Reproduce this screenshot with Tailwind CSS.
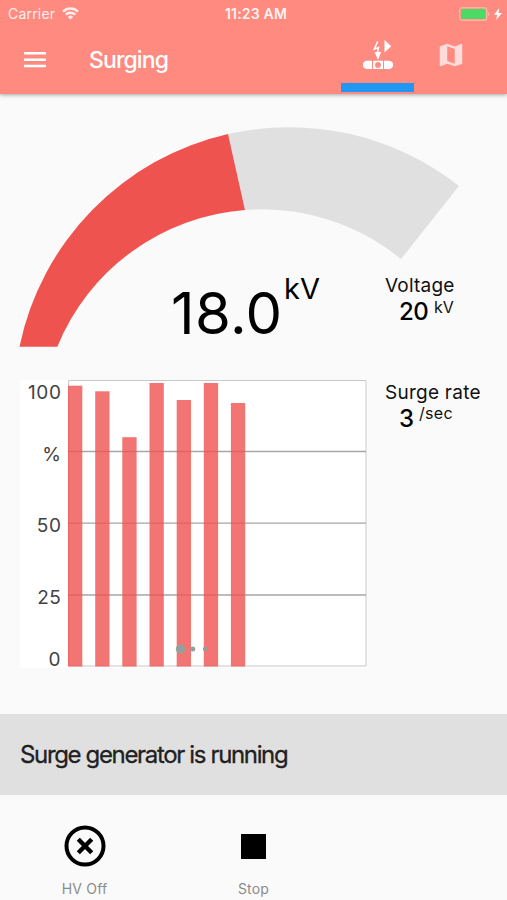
<!DOCTYPE html>
<html lang="en">
<head>
    <meta charset="UTF-8">
    <meta name="viewport" content="width=device-width, initial-scale=1.0">
    <title>Surging</title>
    <script src="https://cdn.jsdelivr.net/npm/@tailwindcss/browser@4"></script>
</head>
<body class="flex flex-col h-[900px] w-[507px] overflow-hidden bg-[#fafafa] font-['Inter',sans-serif] text-black">

    <!-- App bar -->
    <header class="h-[94px] shrink-0 bg-[#ff8a80] text-white shadow-[0_1px_4px_rgba(0,0,0,0.35)]">
        <!-- Status bar -->
        <div class="grid grid-cols-3 items-center h-[27px] pl-[8px] pr-[5px] text-[14px] leading-none">
            <div class="flex items-center gap-[7px] opacity-85">
                <span class="tracking-[0.2px]">Carrier</span>
                <svg class="w-[17px] h-[13px]" viewBox="0 0 17 13" fill="none" stroke="currentColor" stroke-width="2.4">
                    <path d="M1 4.6a10.6 10.6 0 0 1 15 0M3.8 7.7a6.6 6.6 0 0 1 9.4 0" />
                    <path d="M8.5 12.6L5.9 9.9a3.7 3.7 0 0 1 5.2 0z" fill="currentColor" stroke="none" />
                </svg>
            </div>
            <span class="pt-px pl-[2px] text-center font-semibold tracking-[0.2px] text-[14px] opacity-90">11:23 AM</span>
            <div class="flex items-center justify-end gap-[3px]">
                <svg class="w-[32px] h-[14px]" viewBox="0 0 32 14">
                    <rect x="0.7" y="0.7" width="27" height="12.6" rx="2.5" fill="none" stroke="#ffb5a3" stroke-width="1.4" />
                    <rect x="2" y="2" width="24.5" height="10" rx="1" fill="#4cd964" />
                    <path d="M29.3 5v4.2c1.6-.6 1.6-3.6 0-4.2z" fill="#ffc0b8" />
                </svg>
                <svg class="w-[8px] h-[12px]" viewBox="0 0 8 12" fill="currentColor"><path d="M5.2 0L0 6.8h3.2L2.2 12 8 4.9H4.6z" /></svg>
            </div>
        </div>
        <!-- Toolbar -->
        <div class="flex h-[65px]">
            <svg class="mt-[25px] ml-[24px] w-[22px] h-[16px]" viewBox="0 0 22 16" fill="currentColor">
                <path d="M0 0h22v2.5H0zM0 6.4h22v2.5H0zM0 12.8h22v2.5H0z" />
            </svg>
            <h1 class="ml-[43px] mt-[18px] w-[252px] text-[23px] leading-[30px] font-medium tracking-[-0.9px]">Surging</h1>
            <!-- Tabs -->
            <div class="flex w-[73px] flex-col items-center border-b-[9px] border-[#2196f3]">
                <svg class="mt-[13px] w-[30px] h-[30px]" viewBox="0 0 30 30" fill="currentColor">
                    <path d="M14.6 1.5L11.3 9.2l4.200-1.700-1 5" fill="none" stroke="currentColor" stroke-width="1.5" />
                    <path d="M11.6 12h6.6l-3.2 8z" />
                    <path d="M21.5 0v12.5L28.3 6.3z" />
                    <path d="M4 20.7H9v8.3H4a4.150 4.150 0 0 1 0-8.300zM26 20.7H21v8.3h5a4.150 4.150 0 0 0 0-8.300z" />
                    <path fill-rule="evenodd" d="M10 20.7h10v8.3H10zM15 22a2.9 2.9 0 1 0 0 5.8 2.9 2.9 0 0 0 0-5.8z" />
                </svg>
            </div>
            <div class="flex w-[73px] justify-center">
                <svg class="mt-[13px] w-[30px] h-[30px] opacity-70" viewBox="0 0 24 24" fill="currentColor">
                    <path d="M20.5 3l-.16.03L15 5.1 9 3 3.36 4.9c-.21.07-.36.25-.36.48V20.5c0 .28.22.5.5.5l.16-.03L9 18.9l6 2.1 5.64-1.9c.21-.07.36-.25.36-.48V3.5c0-.28-.22-.5-.5-.5zM15 19l-6-2.11V5l6 2.11V19z" />
                </svg>
            </div>
        </div>
    </header>

    <!-- Voltage gauge -->
    <section class="relative h-[286px] shrink-0">
        <svg class="block w-[507px] h-[286px]" viewBox="0 94 507 286">
            <path d="M228 134A275 275 0 0 1 459 186L401 259A220.5 220.5 0 0 0 245 210z" fill="#e0e0e0" />
            <path d="M19.5 346.7A275 275 0 0 1 228 134L245 210A220.5 220.5 0 0 0 57.3 346.7z" fill="#ef5350" />
        </svg>
        <div class="absolute left-[171px] top-[179px] flex items-start whitespace-nowrap">
            <span class="mt-[10px] w-[113px] text-[58px] leading-[60px] tracking-[0.4px]">18.0</span>
            <span class="text-[29px] leading-[31px]">kV</span>
        </div>
        <div class="absolute left-[385px] top-[179px] whitespace-nowrap text-[#111]">
            <p class="text-[19px] leading-[25px] tracking-[0.2px]">Voltage</p>
            <p class="flex items-start pl-[14px]">
                <span class="w-[35px] text-[24px] leading-[27px] font-medium tracking-[-0.5px] text-black">20</span>
                <span class="text-[16px] leading-[18px]">kV</span>
            </p>
        </div>
    </section>

    <!-- Surge energy chart -->
    <section class="flex h-[334px] shrink-0 pl-[20px]">
        <svg class="w-[347px] h-[288px] overflow-visible bg-white" viewBox="20 380 347 288">
            <path d="M68.5 666V380.5H366V666z" fill="none" stroke="#c8c8c8" />
            <path d="M68 451.5H366M68 523.2H366M68 595H366" fill="none" stroke="#a6a6a6" stroke-width="1.3" />
            <g fill="#ef5350" fill-opacity="0.8">
                <rect x="68" y="385.7" width="14.3" height="280.8" />
                <rect x="95.2" y="391.3" width="14.3" height="275.2" />
                <rect x="122.3" y="437.2" width="14.3" height="229.3" />
                <rect x="149.5" y="383" width="14.3" height="283.5" />
                <rect x="176.7" y="400" width="14.3" height="266.5" />
                <rect x="203.8" y="383" width="14.3" height="283.5" />
                <rect x="230.9" y="403" width="14.3" height="263.5" />
            </g>
            <g fill="#95a09c">
                <circle cx="180.5" cy="649" r="4.7" />
                <circle cx="192.8" cy="649" r="2.5" />
                <circle cx="205" cy="649" r="2.2" />
            </g>
            <g class="text-[19px]" fill="#424242" text-anchor="end" letter-spacing="0.6">
                <text x="61.5" y="398.5">100</text>
                <text x="61.5" y="460.5">%</text>
                <text x="61.5" y="532">50</text>
                <text x="61.5" y="603.5">25</text>
                <text x="61" y="665.5">0</text>
            </g>
        </svg>
        <div class="ml-[18px] whitespace-nowrap text-[#111]">
            <p class="text-[19px] leading-[25px] tracking-[0.25px]">Surge rate</p>
            <p class="flex items-start pl-[14px]">
                <span class="w-[20px] text-[24px] leading-[27px] font-medium text-black">3</span>
                <span class="text-[16px] leading-[17px] tracking-[0.3px]">/sec</span>
            </p>
        </div>
    </section>

    <!-- Status message -->
    <section class="flex h-[81px] shrink-0 items-center bg-[#e0e0e0] pl-[20px]">
        <p class="pt-px text-[24px] tracking-[-1.35px] text-[#212121] whitespace-nowrap [-webkit-text-stroke:0.3px_#212121]">Surge generator is running</p>
    </section>

    <!-- Bottom actions -->
    <nav class="grid grid-cols-3 pt-[30px] text-[14px] tracking-[0.2px] text-[#8c8c8c]">
        <button class="flex flex-col items-center">
            <svg class="w-[42px] h-[42px]" viewBox="0 0 42 42" fill="none" stroke="#000" stroke-width="4">
                <circle cx="21" cy="21" r="18.5" />
                <path d="M14.3 14.3l13.4 13.4M27.7 14.3l-13.4 13.4" stroke-width="4.4" />
            </svg>
            <span class="mt-[11px] leading-[21px]">HV Off</span>
        </button>
        <button class="flex flex-col items-center">
            <span class="my-[8.5px] size-[25px] bg-black"></span>
            <span class="mt-[11px] leading-[21px]">Stop</span>
        </button>
    </nav>
</body>
</html>
